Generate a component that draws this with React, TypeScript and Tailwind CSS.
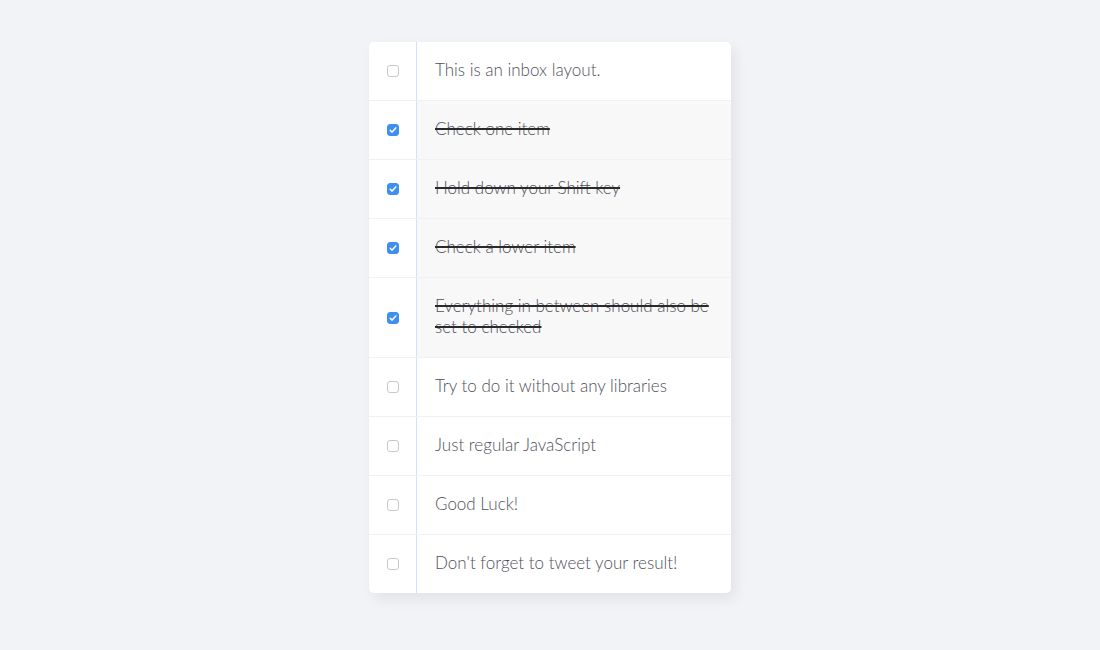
import React, { useState } from 'react';

interface Item {
  id: number;
  text: string;
  done: boolean;
}

const initialItems: Item[] = [
  { id: 1, text: 'This is an inbox layout.', done: false },
  { id: 2, text: 'Check one item', done: true },
  { id: 3, text: 'Hold down your Shift key', done: true },
  { id: 4, text: 'Check a lower item', done: true },
  { id: 5, text: 'Everything in between should also be set to checked', done: true },
  { id: 6, text: 'Try to do it without any libraries', done: false },
  { id: 7, text: 'Just regular JavaScript', done: false },
  { id: 8, text: 'Good Luck!', done: false },
  { id: 9, text: "Don't forget to tweet your result!", done: false },
];

const App: React.FC = () => {
  const [items, setItems] = useState<Item[]>(initialItems);
  const [lastIndex, setLastIndex] = useState<number | null>(null);

  const toggle = (index: number, shift: boolean) => {
    const checked = !items[index].done;
    setItems(
      items.map((item, i) => {
        if (i === index) return { ...item, done: checked };
        if (shift && checked && lastIndex !== null) {
          const lo = Math.min(lastIndex, index);
          const hi = Math.max(lastIndex, index);
          if (i > lo && i < hi) return { ...item, done: true };
        }
        return item;
      })
    );
    if (checked) setLastIndex(index);
  };

  return (
    <div className="min-h-[650px] bg-[#f2f3f7] pt-[42px] font-['Lato',sans-serif]">
      <div className="mx-auto w-[362px] overflow-hidden rounded-[5px] bg-white shadow-[4px_6px_14px_rgba(0,0,0,0.07)]">
        {items.map((item, i) => (
          <div
            key={item.id}
            className="flex items-stretch border-b border-[#f1f1f1] last:border-b-0"
          >
            <label className="relative flex w-[47px] shrink-0 cursor-pointer items-center justify-center">
              <input
                type="checkbox"
                checked={item.done}
                onChange={() => {}}
                onClick={(e) => toggle(i, e.shiftKey)}
                className="h-[12px] w-[12px] cursor-pointer appearance-none rounded-[3px] border border-[#c8c8c8] bg-white checked:border-[#3d8ff2] checked:bg-[#3d8ff2]"
              />
              {item.done && (
                <svg
                  viewBox="0 0 12 12"
                  className="pointer-events-none absolute left-1/2 top-1/2 h-[12px] w-[12px] -translate-x-1/2 -translate-y-1/2"
                >
                  <path d="M3.2 6.3 L5.1 8.1 L8.8 3.9" fill="none" stroke="white" strokeWidth="1.5" strokeLinecap="round" strokeLinejoin="round" />
                </svg>
              )}
            </label>
            <p
              className={
                item.done
                  ? 'flex-1 border-l border-[#d1e2ff] bg-[#f8f8f8] px-[18px] pb-[20px] pt-[17px] text-[17px] font-light leading-[21px] text-[#50505a] line-through decoration-[#2a2a2a] decoration-2'
                  : 'flex-1 border-l border-[#d1e2ff] px-[18px] pb-[20px] pt-[17px] text-[17px] font-light leading-[21px] text-[#50505a]'
              }
            >
              {item.text}
            </p>
          </div>
        ))}
      </div>
    </div>
  );
};

export default App;
